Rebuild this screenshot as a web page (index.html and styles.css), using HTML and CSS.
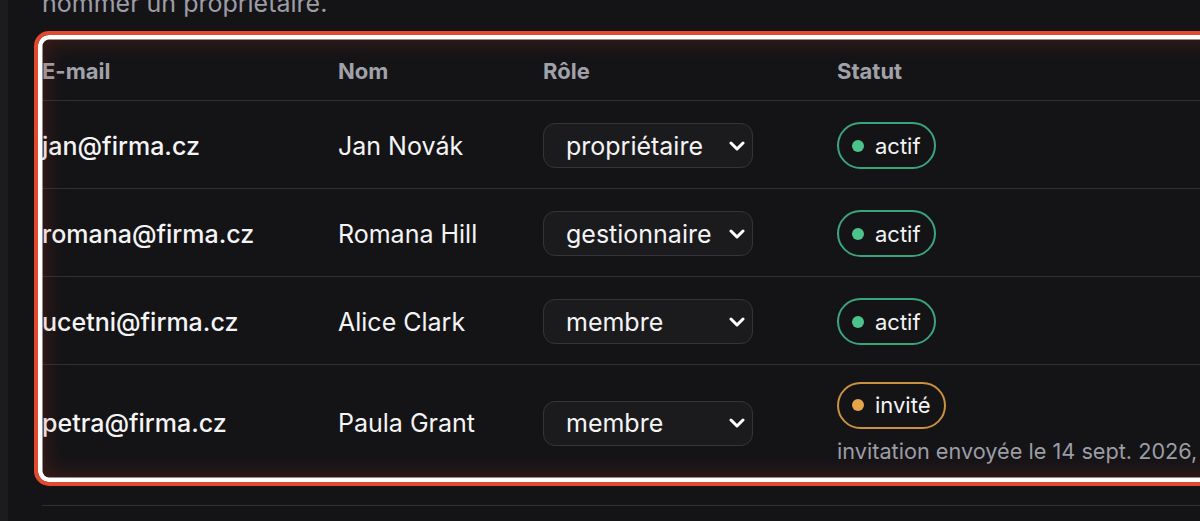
FILE: index.html
```html
<!DOCTYPE html>
<html lang="fr">
<head>
<meta charset="utf-8">
<title>Membres</title>
<link rel="stylesheet" href="styles.css">
</head>
<body>
<div class="panel">
  <p class="intro">nommer un propriétaire.</p>
  <div class="table-wrap">
    <table class="members">
      <colgroup>
        <col class="c-email"><col class="c-name"><col class="c-role"><col class="c-status">
      </colgroup>
      <thead>
        <tr><th>E-mail</th><th>Nom</th><th>Rôle</th><th>Statut</th></tr>
      </thead>
      <tbody>
        <tr>
          <td class="email">jan@firma.cz</td>
          <td>Jan Novák</td>
          <td><div class="select"><span>propriétaire</span><svg class="chev" viewBox="0 0 16 10" width="16" height="10"><path d="M2 2 L8 8 L14 2" fill="none" stroke="#fff" stroke-width="3" stroke-linecap="round" stroke-linejoin="round"/></svg></div></td>
          <td><span class="badge ok"><i class="dot"></i>actif</span></td>
        </tr>
        <tr>
          <td class="email">romana@firma.cz</td>
          <td>Romana Hill</td>
          <td><div class="select"><span>gestionnaire</span><svg class="chev" viewBox="0 0 16 10" width="16" height="10"><path d="M2 2 L8 8 L14 2" fill="none" stroke="#fff" stroke-width="3" stroke-linecap="round" stroke-linejoin="round"/></svg></div></td>
          <td><span class="badge ok"><i class="dot"></i>actif</span></td>
        </tr>
        <tr>
          <td class="email">ucetni@firma.cz</td>
          <td>Alice Clark</td>
          <td><div class="select"><span>membre</span><svg class="chev" viewBox="0 0 16 10" width="16" height="10"><path d="M2 2 L8 8 L14 2" fill="none" stroke="#fff" stroke-width="3" stroke-linecap="round" stroke-linejoin="round"/></svg></div></td>
          <td><span class="badge ok"><i class="dot"></i>actif</span></td>
        </tr>
        <tr class="last">
          <td class="email">petra@firma.cz</td>
          <td>Paula Grant</td>
          <td><div class="select"><span>membre</span><svg class="chev" viewBox="0 0 16 10" width="16" height="10"><path d="M2 2 L8 8 L14 2" fill="none" stroke="#fff" stroke-width="3" stroke-linecap="round" stroke-linejoin="round"/></svg></div></td>
          <td>
            <div class="status-stack">
              <span class="badge warn"><i class="dot"></i>invité</span>
              <span class="sub">invitation envoyée le 14 sept. 2026, 10:42</span>
            </div>
          </td>
        </tr>
      </tbody>
    </table>
    <div class="highlight"></div>
  </div>
  <div class="divider"></div>
</div>
</body>
</html>
```

FILE: styles.css
```css
* { box-sizing: border-box; }
html, body { margin: 0; padding: 0; }
body {
  background: #1c1c1f;
  font-family: Inter, "Noto Sans", sans-serif;
  color: #f4f4f5;
  height: 521px;
  overflow: hidden;
}
.panel {
  margin-left: 8px;
  background: #141417;
  min-height: 521px;
  padding-left: 34px;
  overflow: hidden;
}
.intro {
  margin: -13px 0 0;
  font-size: 25px;
  line-height: 32px;
  color: #9d9da6;
  white-space: nowrap;
}
.table-wrap {
  position: relative;
  margin-top: 21px;
}
.members {
  border-collapse: collapse;
  table-layout: fixed;
  width: 1300px;
}
.c-email { width: 296px; }
.c-name { width: 205px; }
.c-role { width: 294px; }
.c-status { width: 505px; }
.members th {
  text-align: left;
  font-size: 22px;
  font-weight: 700;
  color: #a1a1aa;
  height: 60px;
  padding: 2px 0 0;
  border-bottom: 1.5px solid #2f2f34;
  vertical-align: middle;
}
.members td {
  padding: 17px 0 14px;
  height: 88px;
  font-size: 25px;
  font-weight: 400;
  vertical-align: middle;
  border-bottom: 1.5px solid #2f2f34;
  white-space: nowrap;
}
.members tr.last td { border-bottom: none; height: 112px; }
.members td.email { font-weight: 500; }
.select {
  display: flex;
  align-items: center;
  justify-content: space-between;
  width: 210px;
  height: 45px;
  padding: 0 7px 0 22px;
  background: #1b1b1e;
  border: 1.5px solid #34343a;
  border-radius: 12px;
  font-size: 25px;
}
.chev { display: block; }
.badge {
  display: inline-flex;
  align-items: center;
  height: 47px;
  padding: 0 13px 0 13px;
  border: 2px solid #3aa57a;
  border-radius: 24px;
  font-size: 22px;
  background: #141417;
}
.badge .dot {
  width: 12px;
  height: 12px;
  border-radius: 50%;
  background: #4cc38a;
  margin-right: 11px;
}
.badge.warn { border-color: #c8923f; }
.badge.warn .dot { background: #e5a54a; }
.status-stack {
  display: flex;
  flex-direction: column;
  align-items: flex-start;
  gap: 8px;
}
.sub {
  font-size: 21.7px;
  color: #9d9da6;
  line-height: 28px;
}
.highlight {
  position: absolute;
  left: -8px;
  top: -9px;
  width: 1230px;
  height: 455px;
  border: 4.5px solid #e24a2f;
  border-radius: 15px;
  box-shadow: inset 0 0 0 4.5px #ffffff, inset 0 0 22px 6px rgba(190, 50, 30, 0.28);
  pointer-events: none;
}
.divider {
  margin-top: 26px;
  border-top: 1.5px solid #2f2f34;
}
```
